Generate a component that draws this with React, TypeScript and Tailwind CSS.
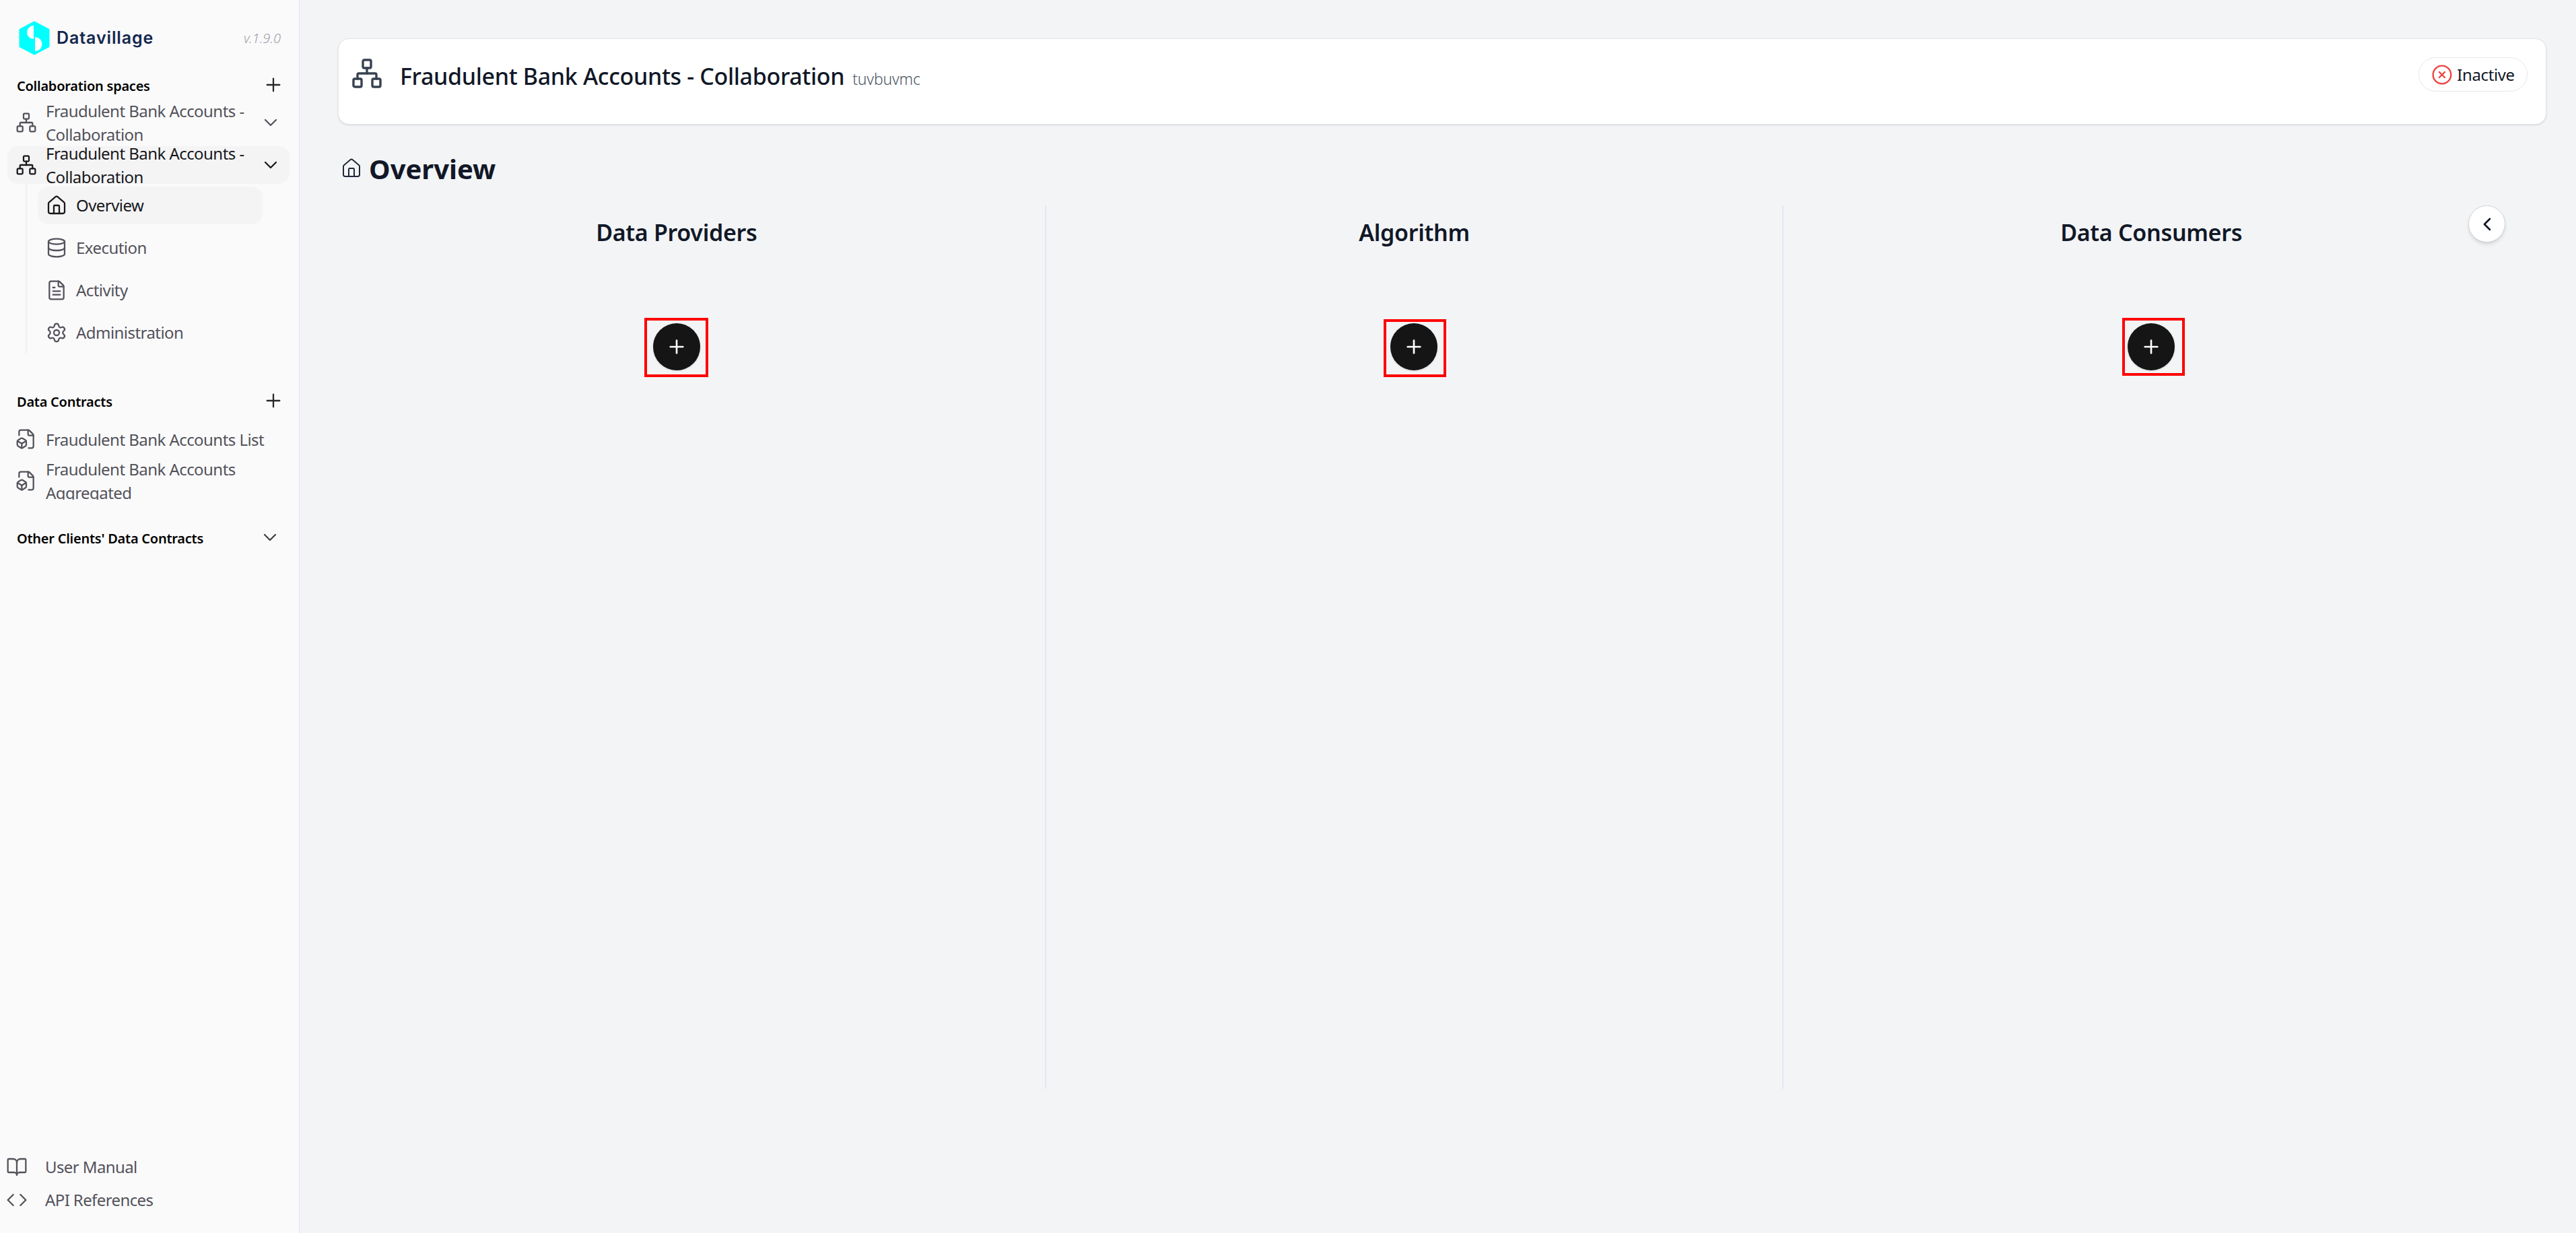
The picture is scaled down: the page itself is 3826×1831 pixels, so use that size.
import { BookOpen, ChevronDown, ChevronLeft, CircleX, Code, Database, FileBox, FileText, House, Network, Plus, Settings } from "lucide-react";

const font = "font-['Noto_Sans','Open_Sans',sans-serif]";

function Logo() {
  return (
    <svg width="46" height="51" viewBox="0 0 46 51" className="shrink-0">
      <path d="M23 2 L44 13 V38 L23 49 L2 38 V13 Z" fill="#00ffff" stroke="#00ffff" strokeWidth="3" strokeLinejoin="round" />
      <path d="M22 7 A10 10 0 0 0 22 27 Z" fill="#fff" />
      <path d="M24 24 A10.500 10.500 0 0 1 24 45 Z" fill="#fff" />
    </svg>
  );
}

function SectionHeading({ label, plus, chevron }: { label: string; plus?: boolean; chevron?: boolean }) {
  return (
    <div className="flex h-6 items-center justify-between pl-[25px]">
      <span className="text-[20px] leading-6 font-semibold tracking-[-0.25px] text-black">{label}</span>
      {plus && <Plus size={32} strokeWidth={1.7} className="mr-[22px] -translate-y-0.5 text-[#27272a]" />}
      {chevron && <ChevronDown size={32} strokeWidth={1.7} className="mr-[27px] -translate-y-0.5 text-[#3f3f46]" />}
    </div>
  );
}

function CollabRow({ active }: { active?: boolean }) {
  return (
    <div className={`ml-[11px] flex h-14 w-[419px] items-center overflow-hidden rounded-2xl ${active ? "bg-[#f4f4f5] text-[#18181b]" : "text-[#52525b]"}`}>
      <Network size={32} strokeWidth={1.7} className="ml-3 shrink-0" />
      <span className="ml-[13px] w-[312px] shrink-0 text-[24px] leading-[35px] tracking-[-0.55px]">Fraudulent Bank Accounts - Collaboration</span>
      <ChevronDown size={32} strokeWidth={1.7} className="ml-1.5 shrink-0" />
    </div>
  );
}

function SubItem({ icon: Icon, label, active }: { icon: typeof House; label: string; active?: boolean }) {
  return (
    <div className={`flex h-14 w-[334px] items-center rounded-2xl pl-3 ${active ? "bg-[#f4f4f5] text-[#18181b]" : "text-[#52525b]"}`}>
      <Icon size={32} strokeWidth={1.7} className="shrink-0" />
      <span className="ml-[13px] text-[24px] tracking-[-0.55px]">{label}</span>
    </div>
  );
}

function ContractRow({ label }: { label: string }) {
  return (
    <div className="ml-[11px] flex h-14 w-[419px] items-center overflow-hidden text-[#52525b]">
      <FileBox size={32} strokeWidth={1.7} className="ml-3 shrink-0" />
      <span className="ml-[13px] w-[340px] shrink-0 text-[24px] leading-[35px] tracking-[-0.55px]">{label}</span>
    </div>
  );
}

function FootLink({ icon: Icon, label }: { icon: typeof House; label: string }) {
  return (
    <div className="flex h-[49px] items-center pl-[9px] text-[#52525b]">
      <Icon size={32} strokeWidth={1.7} className="shrink-0" />
      <span className="ml-[26px] text-[24px] tracking-[-0.6px]">{label}</span>
    </div>
  );
}

function Column({ title, children, last }: { title: string; children: React.ReactNode; last?: boolean }) {
  return (
    <div className={`flex h-[1312px] flex-col items-center pt-4 ${last ? "pr-1" : "border-r-2 border-[#e2e8f0]"}`}>
      <h2 className="text-[34px] leading-[48px] font-semibold tracking-[-0.3px] text-[#111827]">{title}</h2>
      <div className="relative mt-[111px]">
        <button className="flex h-[70px] w-[70px] items-center justify-center rounded-full bg-[#151515] text-white shadow-sm">
          <Plus size={32} strokeWidth={2} />
        </button>
        {children}
      </div>
    </div>
  );
}

export default function App() {
  return (
    <div className={`flex h-screen w-screen overflow-hidden bg-[#f3f4f6] ${font}`}>
      {/* Sidebar */}
      <aside className="flex h-full w-[445px] shrink-0 flex-col justify-between border-r border-[#e2e8f0] bg-[#fafafa] pt-[31px]">
        <div>
          <div className="flex h-[51px] items-center pl-7">
            <Logo />
            <span className="ml-[10px] font-['Inter',sans-serif] text-[25px] font-semibold tracking-[0.9px] text-[#14274e]">Datavillage</span>
            <span className="ml-auto mr-[27px] text-[20px] font-light text-[#a1a1aa] italic">v.1.9.0</span>
          </div>

          <div className="mt-[34px]">
            <SectionHeading label="Collaboration spaces" plus />
          </div>
          <div className="mt-[14px] flex flex-col gap-[7px]">
            <CollabRow />
            <CollabRow active />
          </div>
          <div className="ml-[38px] flex flex-col gap-[7px] border-l-2 border-[#f0f0f1] pt-1 pb-[3px] pl-4">
            <SubItem icon={House} label="Overview" active />
            <SubItem icon={Database} label="Execution" />
            <SubItem icon={FileText} label="Activity" />
            <SubItem icon={Settings} label="Administration" />
          </div>

          <div className="mt-[60px]">
            <SectionHeading label="Data Contracts" plus />
          </div>
          <div className="mt-[15px] flex flex-col gap-1.5">
            <ContractRow label="Fraudulent Bank Accounts List" />
            <ContractRow label="Fraudulent Bank Accounts Aggregated" />
          </div>

          <div className="mt-[46px]">
            <SectionHeading label="Other Clients' Data Contracts" chevron />
          </div>
        </div>

        <div className="pb-[25px]">
          <FootLink icon={BookOpen} label="User Manual" />
          <FootLink icon={Code} label="API References" />
        </div>
      </aside>

      {/* Main */}
      <main className="relative flex-1 pt-[57px] pl-[57px]">
        <div className="flex h-[128px] w-[3280px] items-start justify-between rounded-2xl border border-[#e5e7eb] bg-white pt-[27px] pr-[27px] pl-[18px] shadow-sm">
          <div className="flex items-start">
            <Network size={48} strokeWidth={1.7} className="text-[#374151]" />
            <div className="mt-[2px] ml-[25px] flex items-baseline gap-3">
              <span className="text-[34px] leading-[52px] font-medium tracking-[-0.35px] text-[#111827]">Fraudulent Bank Accounts - Collaboration</span>
              <span className="text-[23px] font-light tracking-[-0.2px] text-[#4b5563]">tuvbuvmc</span>
            </div>
          </div>
          <div className="flex h-[51px] w-[162px] items-center justify-center gap-1.5 rounded-full border border-[#e5e7eb] text-[24px] tracking-[-0.4px] text-[#111827]">
            <CircleX size={32} strokeWidth={1.8} className="text-[#ef4444]" />
            Inactive
          </div>
        </div>

        <div className="mt-[38px] flex h-[56px] items-center">
          <House size={32} strokeWidth={1.5} className="ml-[4px] -translate-y-[1px] text-[#1f2937]" />
          <h1 className="ml-[10px] text-[40px] leading-[56px] font-bold text-[#111827]">Overview</h1>
        </div>

        <div className="mt-[26px] -ml-[44px] grid w-[3287px] grid-cols-3">
          <Column title="Data Providers">
            <div className="absolute top-[-8px] left-[-13px] h-[88px] w-[95px] border-4 border-[#ff0000]" />
          </Column>
          <Column title="Algorithm">
            <div className="absolute top-[-6px] left-[-10px] h-[86px] w-[93px] border-4 border-[#ff0000]" />
          </Column>
          <Column title="Data Consumers" last>
            <div className="absolute top-[-8px] left-[-8px] h-[86px] w-[93px] border-4 border-[#ff0000]" />
          </Column>
        </div>

        <button className="absolute top-[305px] right-[105px] flex h-[55px] w-[55px] items-center justify-center rounded-full border border-[#d4d4d8] bg-white text-[#111827] shadow-md">
          <ChevronLeft size={32} strokeWidth={2} />
        </button>
      </main>
    </div>
  );
}
